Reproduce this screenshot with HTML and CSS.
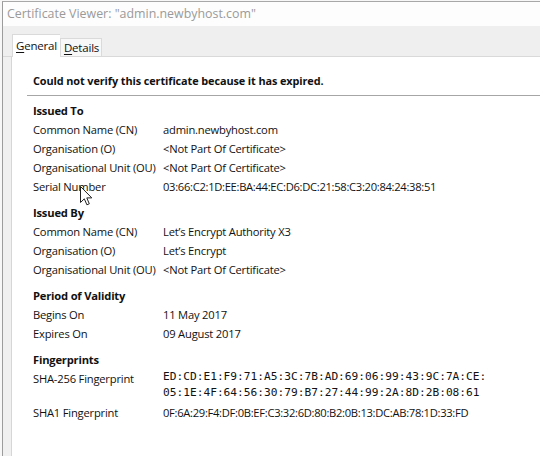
FILE: index.html
```html
<!DOCTYPE html>
<html>
<head>
<meta charset="utf-8">
<link rel="stylesheet" href="styles.css">
</head>
<body>
<div class="window">
  <div class="titlebar">Certificate Viewer: "admin.newbyhost.com"</div>
  <div class="tabstrip">
    <div class="tab active"><u>G</u>eneral</div>
    <div class="tab"><u>D</u>etails</div>
  </div>
  <div class="panel">
    <div class="status">Could not verify this certificate because it has expired.</div>
    <div class="sep"></div>

    <section class="group">
      <h2>Issued To</h2>
      <div class="grid">
        <div>Common Name (CN)</div><div>admin.newbyhost.com</div>
        <div>Organisation (O)</div><div>&lt;Not Part Of Certificate&gt;</div>
        <div>Organisational Unit (OU)</div><div>&lt;Not Part Of Certificate&gt;</div>
        <div>Serial Number</div><div class="hex">03:66:C2:1D:EE:BA:44:EC:D6:DC:21:58:C3:20:84:24:38:51</div>
      </div>
    </section>

    <section class="group">
      <h2>Issued By</h2>
      <div class="grid">
        <div>Common Name (CN)</div><div>Let’s Encrypt Authority X3</div>
        <div>Organisation (O)</div><div>Let’s Encrypt</div>
        <div>Organisational Unit (OU)</div><div>&lt;Not Part Of Certificate&gt;</div>
      </div>
    </section>

    <section class="group">
      <h2>Period of Validity</h2>
      <div class="grid">
        <div>Begins On</div><div>11 May 2017</div>
        <div>Expires On</div><div>09 August 2017</div>
      </div>
    </section>

    <section class="group">
      <h2>Fingerprints</h2>
      <div class="grid">
        <div>SHA-256 Fingerprint</div><div class="mono">ED:CD:E1:F9:71:A5:3C:7B:AD:69:06:99:43:9C:7A:CE:<br>05:1E:4F:64:56:30:79:B7:27:44:99:2A:8D:2B:08:61</div>
        <div>SHA1 Fingerprint</div><div class="hex">0F:6A:29:F4:DF:0B:EF:C3:32:6D:80:B2:0B:13:DC:AB:78:1D:33:FD</div>
      </div>
    </section>
  </div>
</div>
<svg class="cursor" width="13" height="20" viewBox="0 0 13 20">
  <path d="M0.5 0.5 L0.5 16.5 L4.3 12.8 L6.9 18.8 L9.3 17.8 L6.8 11.9 L11.8 11.9 Z" fill="#fff" stroke="#222" stroke-width="1" stroke-linejoin="round"/>
</svg>
</body>
</html>
```

FILE: styles.css
```css
html, body {
  margin: 0;
  padding: 0;
}
body {
  width: 540px;
  height: 456px;
  overflow: hidden;
  background: #f7f7f7;
  font-family: "Open Sans", "Noto Sans", sans-serif;
  font-size: 11.2px;
  color: #111;
  position: relative;
}
.window {
  margin-left: 2px;
  margin-top: 1px;
  height: 455px;
  border-left: 1px solid #9c9c9c;
  border-top: 1px solid #a8a8a8;
  background: #f0f0f0;
  display: flex;
  flex-direction: column;
}
.titlebar {
  height: 24px;
  background: #fdfdfd;
  color: #9a9a9a;
  font-size: 12.4px;
  line-height: 24px;
  padding-left: 4px;
  white-space: nowrap;
}
.tabstrip {
  height: 30px;
  display: flex;
  align-items: flex-end;
  padding-left: 9px;
  border-bottom: 1px solid #d9d9d9;
  background: #efefef;
}
.tab {
  height: 17px;
  line-height: 17px;
  padding: 0 2px 0 3px;
  border: 1px solid #dadada;
  border-bottom: none;
  background: #f8f8f8;
  color: #111;
  font-size: 11.5px;
  letter-spacing: -0.2px;
}
.tab.active {
  height: 22px;
  line-height: 22px;
  padding: 0 3px 0 3px;
  background: #fff;
  margin-bottom: -1px;
  position: relative;
  border-right: none;
}
.tab u {
  text-decoration-thickness: 1px;
  text-underline-offset: 2px;
}
.panel {
  flex: 1;
  margin-left: 8px;
  background: #fff;
  border-left: 1px solid #d6d6d6;
  padding-top: 14px;
}
.status {
  font-weight: 700;
  font-size: 10.9px;
  line-height: 19px;
  padding-left: 21px;
  letter-spacing: -0.1px;
}
.sep {
  margin: 5px 0 0 15px;
  height: 1px;
  background: #a6a6a6;
}
.group {
  padding-left: 21px;
  margin-top: 5px;
}
.group + .group {
  margin-top: 7px;
}
h2 {
  margin: 0;
  font-size: 11.2px;
  font-weight: 700;
  line-height: 19px;
  letter-spacing: -0.2px;
}
.grid {
  display: grid;
  grid-template-columns: 130px 1fr;
  line-height: 19px;
  letter-spacing: -0.2px;
  white-space: nowrap;
}
.hex {
  letter-spacing: -0.3px;
}
.mono {
  font-family: "DejaVu Sans Mono", monospace;
  font-size: 11.2px;
  line-height: 16px;
  letter-spacing: 0;
  padding-top: 0;
  margin-bottom: 2px;
}
.cursor {
  position: absolute;
  left: 80px;
  top: 186px;
}
```
